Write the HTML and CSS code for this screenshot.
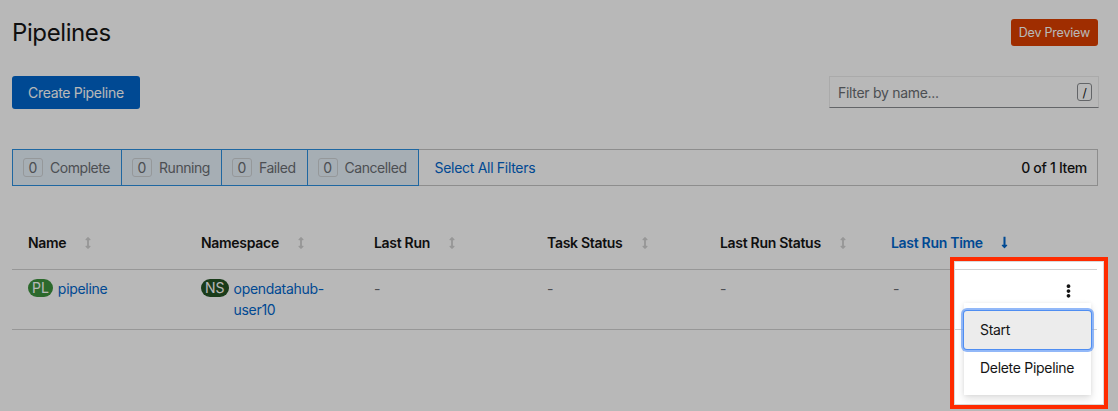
FILE: index.html
```html
<!DOCTYPE html>
<html lang="en">
<head>
<meta charset="utf-8">
<title>Pipelines</title>
<link rel="stylesheet" href="styles.css">
</head>
<body>
<div class="page">
  <div class="head">
    <h1 class="title">Pipelines</h1>
    <span class="badge-dev">Dev Preview</span>
  </div>
  <div class="actions">
    <button class="btn-primary">Create Pipeline</button>
    <div class="search">
      <span class="placeholder">Filter by name...</span>
      <span class="kbd">/</span>
    </div>
  </div>
  <div class="filterbar">
    <div class="chips">
      <span class="chip"><span class="count">0</span>Complete</span>
      <span class="chip"><span class="count">0</span>Running</span>
      <span class="chip"><span class="count">0</span>Failed</span>
      <span class="chip"><span class="count">0</span>Cancelled</span>
    </div>
    <a class="link">Select All Filters</a>
    <span class="items">0 of 1 Item</span>
  </div>
  <table class="table">
    <colgroup>
      <col class="c-main"><col class="c-main"><col class="c-main"><col class="c-main"><col class="c-main"><col class="c-main"><col class="c-kebab">
    </colgroup>
    <thead>
      <tr>
        <th><span class="sort">Name<span class="sort-ic"><svg viewBox="0 0 256 512" width="6" height="12"><path d="M214 378h-46V134h46c21 0 32-26 17-41L145 7c-9-9-25-9-34 0L25 93c-15 15-4 41 17 41h46v244H42c-21 0-32 26-17 41l86 86c9 9 25 9 34 0l86-86c15-15 4-41-17-41z"/></svg></span></span></th>
        <th><span class="sort">Namespace<span class="sort-ic"><svg viewBox="0 0 256 512" width="6" height="12"><path d="M214 378h-46V134h46c21 0 32-26 17-41L145 7c-9-9-25-9-34 0L25 93c-15 15-4 41 17 41h46v244H42c-21 0-32 26-17 41l86 86c9 9 25 9 34 0l86-86c15-15 4-41-17-41z"/></svg></span></span></th>
        <th><span class="sort">Last Run<span class="sort-ic"><svg viewBox="0 0 256 512" width="6" height="12"><path d="M214 378h-46V134h46c21 0 32-26 17-41L145 7c-9-9-25-9-34 0L25 93c-15 15-4 41 17 41h46v244H42c-21 0-32 26-17 41l86 86c9 9 25 9 34 0l86-86c15-15 4-41-17-41z"/></svg></span></span></th>
        <th><span class="sort">Task Status<span class="sort-ic"><svg viewBox="0 0 256 512" width="6" height="12"><path d="M214 378h-46V134h46c21 0 32-26 17-41L145 7c-9-9-25-9-34 0L25 93c-15 15-4 41 17 41h46v244H42c-21 0-32 26-17 41l86 86c9 9 25 9 34 0l86-86c15-15 4-41-17-41z"/></svg></span></span></th>
        <th><span class="sort">Last Run Status<span class="sort-ic"><svg viewBox="0 0 256 512" width="6" height="12"><path d="M214 378h-46V134h46c21 0 32-26 17-41L145 7c-9-9-25-9-34 0L25 93c-15 15-4 41 17 41h46v244H42c-21 0-32 26-17 41l86 86c9 9 25 9 34 0l86-86c15-15 4-41-17-41z"/></svg></span></span></th>
        <th><span class="sort sort-active">Last Run Time<span class="sort-ic"><svg viewBox="0 0 256 512" width="7" height="13"><path d="M168 346V44c0-7-5-12-12-12h-56c-7 0-12 5-12 12v302H42c-21 0-32 26-17 41l86 86c9 9 25 9 34 0l86-86c15-15 4-41-17-41z"/></svg></span></span></th>
        <th></th>
      </tr>
    </thead>
    <tbody>
      <tr>
        <td><div class="res"><span class="res-badge res-pl">PL</span><a class="link">pipeline</a></div></td>
        <td><div class="res"><span class="res-badge res-ns">NS</span><a class="link">opendatahub-user10</a></div></td>
        <td class="dash">-</td>
        <td class="dash">-</td>
        <td class="dash">-</td>
        <td class="dash">-</td>
        <td class="kebab-cell">
          <button class="kebab"><svg viewBox="0 0 192 512" width="5" height="14"><path d="M96 184c40 0 72 32 72 72s-32 72-72 72-72-32-72-72 32-72 72-72zM24 72c0 40 32 72 72 72s72-32 72-72S136 0 96 0 24 32 24 72zm0 368c0 40 32 72 72 72s72-32 72-72-32-72-72-72-72 32-72 72z"/></svg></button>
          <div class="spotlight"></div>
          <ul class="menu">
            <li class="menu-item is-focused">Start</li>
            <li class="menu-item">Delete Pipeline</li>
          </ul>
        </td>
      </tr>
    </tbody>
  </table>
</div>
</body>
</html>
```
FILE: styles.css
```css
html, body {
  margin: 0;
  background: #fff;
}
body {
  font-family: Inter, "Noto Sans", sans-serif;
  font-size: 14px;
  letter-spacing: -0.3px;
  color: #151515;
  height: 411px;
  overflow: hidden;
}
.page {
  padding: 19px 20px 0 12px;
}
.head {
  display: flex;
  justify-content: space-between;
  align-items: center;
  height: 27px;
}
.title {
  margin: 0;
  font-size: 24px;
  font-weight: 400;
  line-height: 27px;
  letter-spacing: -0.4px;
}
.badge-dev {
  background: #dd3f00;
  color: #fff;
  font-size: 12.5px;
  line-height: 27px;
  height: 27px;
  padding: 0 8px;
  border-radius: 3px;
  letter-spacing: -0.2px;
}
.actions {
  margin-top: 30px;
  display: flex;
  justify-content: space-between;
  align-items: flex-start;
}
.btn-primary {
  height: 33px;
  padding: 0 16px;
  background: #06c;
  color: #fff;
  border: 0;
  border-radius: 3px;
  font-family: inherit;
  font-size: 14px;
  letter-spacing: -0.3px;
}
.search {
  box-sizing: border-box;
  width: 270px;
  height: 32px;
  margin-right: -1px;
  border: 1px solid #ececec;
  border-bottom-color: #8a8d90;
  display: flex;
  align-items: center;
  justify-content: space-between;
  padding: 0 6px 0 8px;
}
.placeholder {
  color: #6a6e73;
}
.kbd {
  box-sizing: border-box;
  width: 15px;
  height: 18px;
  border: 1px solid #8a8d90;
  border-radius: 3px;
  font-size: 12px;
  display: inline-flex;
  align-items: center;
  justify-content: center;
  color: #151515;
}
.filterbar {
  box-sizing: border-box;
  margin-top: 40px;
  height: 37px;
  display: flex;
  align-items: center;
  border: 1px solid #c4c4c4;
}
.chips {
  display: flex;
  align-self: stretch;
  margin: -1px 0 -1px -1px;
}
.chip {
  display: flex;
  align-items: center;
  gap: 7px;
  padding: 0 11px 0 10px;
  border: 1px solid #2b8fe0;
  margin-left: -1px;
  background: #e7f1fa;
  color: #6a6e73;
  letter-spacing: -0.45px;
}
.chip:first-child {
  margin-left: 0;
}
.count {
  box-sizing: border-box;
  width: 20px;
  height: 19px;
  border: 1px solid #cfd3d6;
  border-radius: 3px;
  display: inline-flex;
  align-items: center;
  justify-content: center;
  letter-spacing: 0;
}
.link {
  color: #06c;
}
.filterbar .link {
  margin-left: 16px;
}
.items {
  margin-left: auto;
  padding-right: 10px;
  font-weight: 500;
}
.table {
  margin-top: 30px;
  width: 1085px;
  border-collapse: collapse;
  table-layout: fixed;
}
.c-main {
  width: 173px;
}
.c-kebab {
  width: 47px;
}
.table th {
  padding: 16px;
  text-align: left;
  font-weight: 600;
  line-height: 21px;
  border-bottom: 1px solid #d2d2d2;
  white-space: nowrap;
}
.table td {
  padding: 8px 16px 9px;
  vertical-align: top;
  line-height: 21px;
  border-bottom: 1px solid #d2d2d2;
}
.sort {
  display: inline-flex;
  align-items: center;
}
.sort-ic {
  display: inline-flex;
  justify-content: center;
  width: 12px;
  margin-left: 16px;
  fill: #d2d2d2;
}
.sort-active {
  color: #06c;
  margin-left: -2px;
}
.sort-active .sort-ic {
  fill: #06c;
}
.res {
  display: flex;
  align-items: flex-start;
  gap: 5px;
}
.res-badge {
  flex: none;
  height: 18px;
  margin-top: 1px;
  padding: 0 4px;
  border-radius: 9px;
  color: #fff;
  font-size: 14px;
  line-height: 18px;
  letter-spacing: 0;
}
.res-pl {
  background: #3e923e;
}
.res-ns {
  background: #245424;
}
.dash {
  color: #6a6e73;
}
.table td.kebab-cell {
  position: relative;
  padding: 8px 10px 9px 0;
  text-align: right;
}
.kebab {
  background: none;
  border: 0;
  padding: 6px 16px;
  margin: 0;
  line-height: 0;
  fill: #151515;
}
.spotlight {
  position: absolute;
  left: -100px;
  top: -13px;
  box-sizing: border-box;
  width: 158px;
  height: 152px;
  border: 4px solid #ff2b00;
  box-shadow: inset 0 0 0 1px #dadada, 0 0 0 3000px rgba(0, 0, 0, 0.28);
  z-index: 10;
  pointer-events: none;
}
.menu {
  position: absolute;
  top: 33px;
  right: 6px;
  width: 127px;
  margin: 0;
  padding: 8px 0;
  list-style: none;
  background: #fff;
  box-shadow: 0 4px 8px rgba(3, 3, 3, 0.12), 0 0 4px rgba(3, 3, 3, 0.06);
  text-align: left;
  z-index: 12;
}
.menu-item {
  padding: 8px 16px 9px;
  line-height: 21px;
  white-space: nowrap;
}
.menu-item.is-focused {
  background: #ececec;
  border-radius: 3px;
  box-shadow: 0 0 0 1px #4f8ef2, 0 0 0 3px rgba(110, 160, 245, 0.75);
}
```
